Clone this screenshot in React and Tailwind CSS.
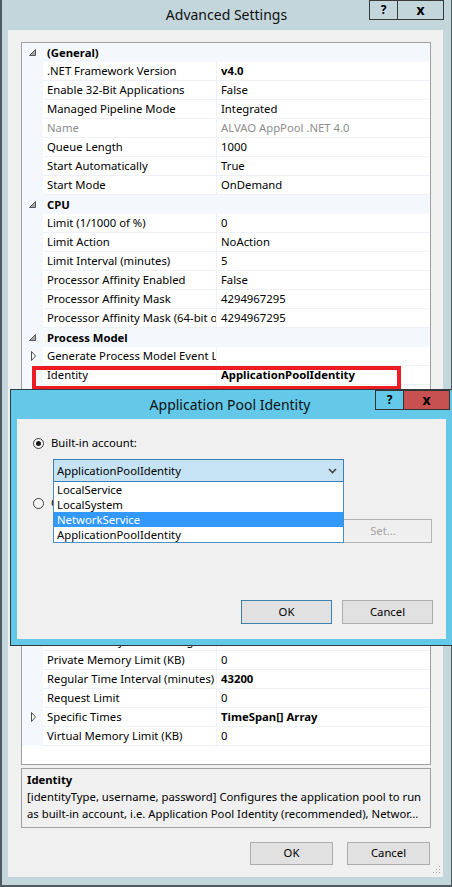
import React from 'react'

const FONT = "font-['Noto_Sans','Segoe_UI',sans-serif]"

const rows = [
  { cat: '(General)' },
  { name: '.NET Framework Version', value: 'v4.0', bold: true },
  { name: 'Enable 32-Bit Applications', value: 'False' },
  { name: 'Managed Pipeline Mode', value: 'Integrated' },
  { name: 'Name', value: 'ALVAO AppPool .NET 4.0', gray: true },
  { name: 'Queue Length', value: '1000' },
  { name: 'Start Automatically', value: 'True' },
  { name: 'Start Mode', value: 'OnDemand' },
  { cat: 'CPU' },
  { name: 'Limit (1/1000 of %)', value: '0' },
  { name: 'Limit Action', value: 'NoAction' },
  { name: 'Limit Interval (minutes)', value: '5' },
  { name: 'Processor Affinity Enabled', value: 'False' },
  { name: 'Processor Affinity Mask', value: '4294967295' },
  { name: 'Processor Affinity Mask (64-bit option)', value: '4294967295' },
  { cat: 'Process Model' },
  { name: 'Generate Process Model Event Log Entry', value: '', expand: true },
  { name: 'Identity', value: 'ApplicationPoolIdentity', bold: true },
  { name: 'Idle Time-out (minutes)', value: '20' },
  { name: 'Idle Time-out Action', value: 'Terminate' },
  { name: 'Load User Profile', value: 'True' },
  { name: 'Maximum Worker Processes', value: '1' },
  { name: 'Ping Enabled', value: 'True' },
  { name: 'Ping Maximum Response Time (seconds)', value: '90' },
  { name: 'Ping Period (seconds)', value: '30' },
  { name: 'Shutdown Time Limit (seconds)', value: '90' },
  { name: 'Startup Time Limit (seconds)', value: '90' },
  { cat: 'Process Orphaning', collapsed: true },
  { cat: 'Recycling' },
  { name: 'Disable Overlapped Recycle', value: 'False' },
  { name: 'Disable Recycling for Configuration Changes', value: 'False' },
  { name: 'Generate Recycle Event Log Entry', value: '', expand: true },
  { name: 'Private Memory Limit (KB)', value: '0' },
  { name: 'Regular Time Interval (minutes)', value: '43200', bold: true },
  { name: 'Request Limit', value: '0' },
  { name: 'Specific Times', value: 'TimeSpan[] Array', bold: true, expand: true },
  { name: 'Virtual Memory Limit (KB)', value: '0' },
]

const ExpandedGlyph = () => (
  <svg width="7" height="7" viewBox="0 0 7 7" className="block">
    <path d="M6.5 0.5 L6.5 6.5 L0.5 6.5 Z" fill="#a6a6a6" stroke="#595959" strokeWidth="1" />
  </svg>
)

const CollapsedGlyph = () => (
  <svg width="6" height="10" viewBox="0 0 6 10" className="block">
    <path d="M0.5 0.5 L4.5 5 L0.5 9.5 Z" fill="#ffffff" stroke="#4d4d4d" strokeWidth="1" />
  </svg>
)

function GridRow({ r }) {
  if (r.cat) {
    return (
      <div className="h-[19px] flex items-center bg-[#f4f7fc]">
        <div className="w-[21px] flex items-center pl-[7px]">
          {r.collapsed ? <CollapsedGlyph /> : <ExpandedGlyph />}
        </div>
        <span className="pl-[4px] font-bold leading-none">{r.cat}</span>
      </div>
    )
  }
  const tone = r.gray ? 'text-[#8d8d8d]' : 'text-black'
  return (
    <div className="h-[19px] flex">
      <div className="w-[21px] bg-[#f4f7fc] flex items-center pl-[9px] pb-[1px]">
        {r.expand && <CollapsedGlyph />}
      </div>
      <div className="flex-1 flex border-b border-[#eef2f8]">
        <div className={`w-[173px] pl-[4px] flex items-center overflow-hidden whitespace-nowrap ${tone}`}>
          {r.name}
        </div>
        <div className="w-px bg-[#eef2f8]" />
        <div className={`flex-1 pl-[4px] flex items-center overflow-hidden whitespace-nowrap ${tone} ${r.bold ? 'font-bold' : ''}`}>
          {r.value}
        </div>
      </div>
    </div>
  )
}

const Radio = ({ checked }) => (
  <div className="w-[11px] h-[11px] rounded-full border border-[#3c3c3c] bg-[#f7f7f7] flex items-center justify-center">
    {checked && <div className="w-[5px] h-[5px] rounded-full bg-[#1a1a1a]" />}
  </div>
)

const Btn = ({ children, primary, className = '' }) => (
  <div
    className={`flex items-center justify-center bg-[#e1e1e1] border ${primary ? 'border-[#3c7fb1]' : 'border-[#adadad]'} ${className}`}
  >
    {children}
  </div>
)

function PoolIdentityDialog() {
  return (
    <div className="absolute left-[10px] top-[389px] w-[444px] h-[257px] border border-[#2d3a3f] bg-[#64c8e8]">
      {/* caption */}
      <div className="relative h-[29px] flex items-center justify-center pr-[4px]">
        <span className="text-[14px] text-[#111]">Application Pool Identity</span>
        <div className="absolute left-[364px] top-0 flex">
          <div className="w-[29px] h-[20px] border border-[#333] flex items-center justify-center font-bold text-[12px]">?</div>
          <div className="w-[46px] h-[20px] border border-l-0 border-[#333] bg-[#c75050] flex items-center justify-center font-bold text-[14px] leading-none">x</div>
        </div>
      </div>

      {/* client */}
      <div className="relative ml-[6px] w-[429px] h-[220px] bg-[#f0f0f0]">
        <div className="pt-[18px] pl-[16px]">
          <div className="h-[12px] flex items-center">
            <Radio checked />
            <span className="ml-[7px]">Built-in account:</span>
          </div>

          <div className="ml-[20px] mt-[10px] w-[291px] h-[23px] border border-[#3c7fb1] bg-[#c6e3f5] flex items-center justify-between pl-[3px] pr-[6px] pt-[1px]">
            <span>ApplicationPoolIdentity</span>
            <svg width="9" height="6" viewBox="0 0 9 6">
              <path d="M1 1 L4.5 4.5 L8 1" fill="none" stroke="#444" strokeWidth="1.6" />
            </svg>
          </div>

          <div className="mt-[15px] h-[12px] flex items-center">
            <Radio />
            <span className="ml-[7px]">Custom account:</span>
          </div>

          <div className="mt-[10px] h-[24px] flex items-center">
            <div className="ml-[20px] w-[273px] h-[22px] border border-[#c8c8c8] bg-[#f0f0f0]" />
            <div className="ml-[8px] w-[98px] h-[24px] border border-[#b4b4b4] bg-[#efefef] flex items-center justify-center text-[#a3a3a3]">
              Set...
            </div>
          </div>

          <div className="mt-[57px] pr-[13px] flex justify-end gap-[10px]">
            <Btn primary className="w-[91px] h-[24px]">OK</Btn>
            <Btn className="w-[91px] h-[24px]">Cancel</Btn>
          </div>
        </div>

        {/* opened drop-down list */}
        <div className="absolute left-[36px] top-[63px] w-[291px] border border-t-0 border-[#4a90c8] bg-white">
          <div className="h-[15px] pl-[3px] pt-[2px] flex items-center">LocalService</div>
          <div className="h-[15px] pl-[3px] pt-[2px] flex items-center">LocalSystem</div>
          <div className="h-[15px] pl-[3px] pt-[2px] flex items-center bg-[#3399ff] text-white">NetworkService</div>
          <div className="h-[15px] pl-[3px] pt-[2px] flex items-center">ApplicationPoolIdentity</div>
        </div>
      </div>
    </div>
  )
}

export default function App() {
  return (
    <div className={`relative w-[452px] h-[887px] overflow-hidden bg-[#c3d6dc] text-[11.3px] text-black ${FONT}`}>
      <div className="h-full flex flex-col border-l-2 border-r border-b-2 border-[#4e5a5f]">
        {/* caption */}
        <div className="relative h-[30px] flex items-center justify-center">
          <span className="text-[14px] text-[#111] pb-[1px]">Advanced Settings</span>
          <div className="absolute right-[7px] top-0 flex">
            <div className="w-[29px] h-[20px] border border-[#3a3a3a] flex items-center justify-center font-bold text-[12px]">?</div>
            <div className="w-[46px] h-[20px] border border-l-0 border-[#3a3a3a] flex items-center justify-center font-bold text-[14px] leading-none">x</div>
          </div>
        </div>

        {/* client */}
        <div className="relative ml-[6px] mr-[8px] h-[847px] bg-[#f0f0f0] pl-[13px] pt-[12px]">
          <div className="w-[410px] h-[723px] border border-[#a0a0a0] bg-white overflow-hidden">
            {rows.map((r, i) => (
              <GridRow key={i} r={r} />
            ))}
          </div>

          <div className="mt-[3px] w-[410px] h-[60px] border border-[#a0a0a0] px-[5px] pt-[2px] leading-[17px]">
            <div className="font-bold">Identity</div>
            <div className="whitespace-nowrap">[identityType, username, password] Configures the application pool to run</div>
            <div className="whitespace-nowrap">as built-in account, i.e. Application Pool Identity (recommended), Networ...</div>
          </div>

          <div className="mt-[14px] w-[410px] pr-[1px] flex justify-end gap-[14px]">
            <Btn className="w-[83px] h-[23px]">OK</Btn>
            <Btn className="w-[83px] h-[23px]">Cancel</Btn>
          </div>

          <svg className="absolute right-[1px] bottom-[2px]" width="10" height="10" viewBox="0 0 10 10">
            <g fill="#a8a8a8">
              <rect x="7" y="1" width="1" height="1" />
              <rect x="4" y="4" width="1" height="1" />
              <rect x="7" y="4" width="1" height="1" />
              <rect x="1" y="7" width="1" height="1" />
              <rect x="4" y="7" width="1" height="1" />
              <rect x="7" y="7" width="1" height="1" />
            </g>
          </svg>
        </div>
      </div>

      {/* highlight box around the Identity row */}
      <div className="absolute left-[32px] top-[366px] w-[369px] h-[24px] border-4 border-[#ed1c24]" />

      <PoolIdentityDialog />
    </div>
  )
}
